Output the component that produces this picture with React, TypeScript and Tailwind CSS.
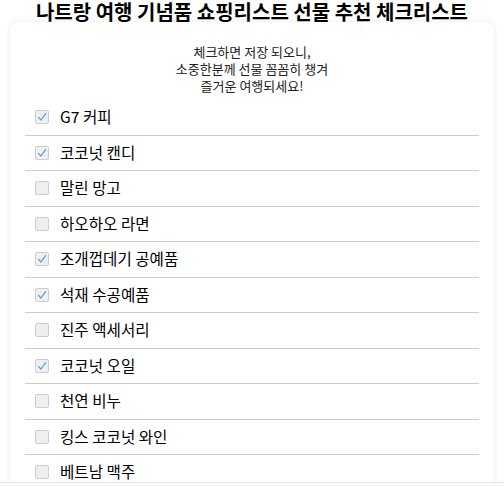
import React from 'react';

const items: { label: string; checked: boolean }[] = [
    { label: 'G7 커피', checked: true },
    { label: '코코넛 캔디', checked: true },
    { label: '말린 망고', checked: false },
    { label: '하오하오 라면', checked: false },
    { label: '조개껍데기 공예품', checked: true },
    { label: '석재 수공예품', checked: true },
    { label: '진주 액세서리', checked: false },
    { label: '코코넛 오일', checked: true },
    { label: '천연 비누', checked: false },
    { label: '킹스 코코넛 와인', checked: false },
    { label: '베트남 맥주', checked: false },
];

function Box({ checked }: { checked: boolean }) {
    return (
        <span className="w-[14px] h-[14px] shrink-0 rounded-[2px] border border-[#cdcdcd] bg-[#efefef] flex items-center justify-center">
            {checked && (
                <svg width="10" height="10" viewBox="0 0 10 10" fill="none">
                    <path d="M1.5 5.4 L3.9 8 L8.6 1.6" stroke="#4b9fe1" strokeWidth="1.2" strokeLinecap="round" strokeLinejoin="round" />
                </svg>
            )}
        </span>
    );
}

export default function App() {
    return (
        <div className="min-h-screen bg-white text-black font-['Noto_Sans_CJK_KR','Noto_Sans',sans-serif]">
            {/* Title */}
            <h1 className="h-[22px] pt-[1px] text-center text-[20px] font-bold leading-[21px] whitespace-nowrap">
                나트랑 여행 기념품 쇼핑리스트 선물 추천 체크리스트
            </h1>

            {/* Card */}
            <div className="mx-[10px] rounded-lg bg-white px-[15px] pt-[21px] pb-4 shadow-[0_0_6px_rgba(0,0,0,0.08)]">
                <p className="text-center text-[13px] leading-[17px] text-[#222]">
                    체크하면 저장 되오니,
                    <br />
                    소중한분께 선물 꼼꼼히 챙겨
                    <br />
                    즐거운 여행되세요!
                </p>

                <ul className="mt-[6px]">
                    {items.map((it) => (
                        <li
                            key={it.label}
                            className="h-[35.5px] flex items-center gap-[11px] pl-[10px] border-b border-[#cccccc] text-[15.6px] leading-none"
                        >
                            <Box checked={it.checked} />
                            <span>{it.label}</span>
                        </li>
                    ))}
                </ul>
            </div>

            {/* bottom edge strip */}
            <div className="fixed bottom-0 left-0 right-0 h-[5px] border-t border-[#e3e3e3] bg-[#fafafa]" />
        </div>
    );
}
